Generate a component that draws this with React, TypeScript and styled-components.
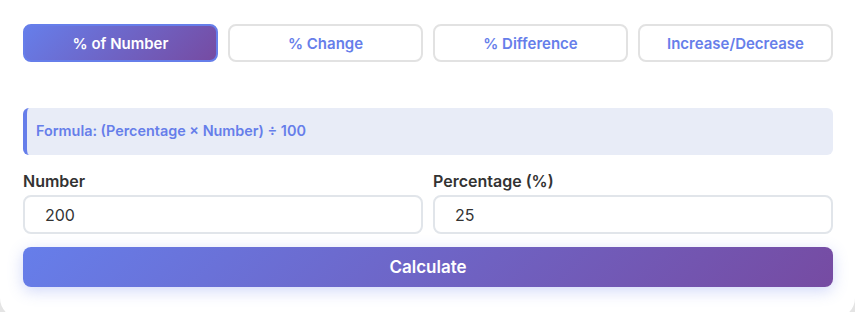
import React, { useState } from 'react';
import styled, { createGlobalStyle } from 'styled-components';

const GlobalStyle = createGlobalStyle`
    html, body {
        margin: 0;
        padding: 0;
        background: #e4e4e4;
        overflow: hidden;
        font-family: Inter, "Liberation Sans", sans-serif;
    }
`;

const Card = styled.div`
    background: #ffffff;
    border-radius: 0 0 20px 20px;
    height: 318px;
    box-sizing: border-box;
    padding: 24px 22px 0 23px;
`;

const Tabs = styled.div`
    display: grid;
    grid-template-columns: repeat(4, 1fr);
    gap: 10px;
`;

const Tab = styled.button<{ $active?: boolean }>`
    height: 38px;
    border-radius: 8px;
    border: 2px solid ${p => (p.$active ? '#667eea' : '#e2e2e2')};
    background: ${p => (p.$active ? 'linear-gradient(135deg, #667eea 0%, #764ba2 100%)' : '#ffffff')};
    color: ${p => (p.$active ? '#ffffff' : '#667eea')};
    font-family: Inter, "Liberation Sans", sans-serif;
    font-size: 15px;
    font-weight: 600;
    cursor: pointer;
    padding: 0;
`;

const Formula = styled.div`
    margin-top: 46px;
    height: 47px;
    box-sizing: border-box;
    display: flex;
    align-items: center;
    background: #e8ecf7;
    border-left: 4px solid #667eea;
    border-radius: 6px;
    padding: 0 9px 2px;
    color: #667eea;
    font-size: 14.4px;
    font-weight: 600;
`;

const Fields = styled.div`
    display: grid;
    grid-template-columns: 1fr 1fr;
    gap: 10px;
    margin-top: 16px;
`;

const Field = styled.div`
    display: flex;
    flex-direction: column;
`;

const Label = styled.label`
    font-size: 16px;
    font-weight: 600;
    color: #333333;
    line-height: 20px;
    margin-bottom: 4px;
`;

const Input = styled.input`
    height: 39px;
    box-sizing: border-box;
    border: 2px solid #e1e5ea;
    border-radius: 8px;
    padding: 0 20px;
    font-family: Inter, "Liberation Sans", sans-serif;
    font-size: 16px;
    color: #333333;
    outline: none;
`;

const CalcButton = styled.button`
    margin-top: 13px;
    width: 100%;
    height: 40px;
    border: none;
    border-radius: 8px;
    background: linear-gradient(135deg, #667eea 0%, #764ba2 100%);
    color: #ffffff;
    font-family: Inter, "Liberation Sans", sans-serif;
    font-size: 17px;
    font-weight: 600;
    box-shadow: 0 4px 15px rgba(102, 126, 234, 0.3);
    cursor: pointer;
`;

const modes = ['% of Number', '% Change', '% Difference', 'Increase/Decrease'];

const App = () => {
    const [mode, setMode] = useState(0);
    const [num, setNum] = useState('200');
    const [pct, setPct] = useState('25');

    return (
        <>
            <GlobalStyle />
            <Card>
                <Tabs>
                    {modes.map((m, i) => (
                        <Tab key={m} $active={i === mode} onClick={() => setMode(i)}>{m}</Tab>
                    ))}
                </Tabs>
                <Formula>Formula: (Percentage × Number) ÷ 100</Formula>
                <Fields>
                    <Field>
                        <Label>Number</Label>
                        <Input value={num} onChange={e => setNum(e.target.value)} />
                    </Field>
                    <Field>
                        <Label>Percentage (%)</Label>
                        <Input value={pct} onChange={e => setPct(e.target.value)} />
                    </Field>
                </Fields>
                <CalcButton>Calculate</CalcButton>
            </Card>
        </>
    );
};

export default App;
